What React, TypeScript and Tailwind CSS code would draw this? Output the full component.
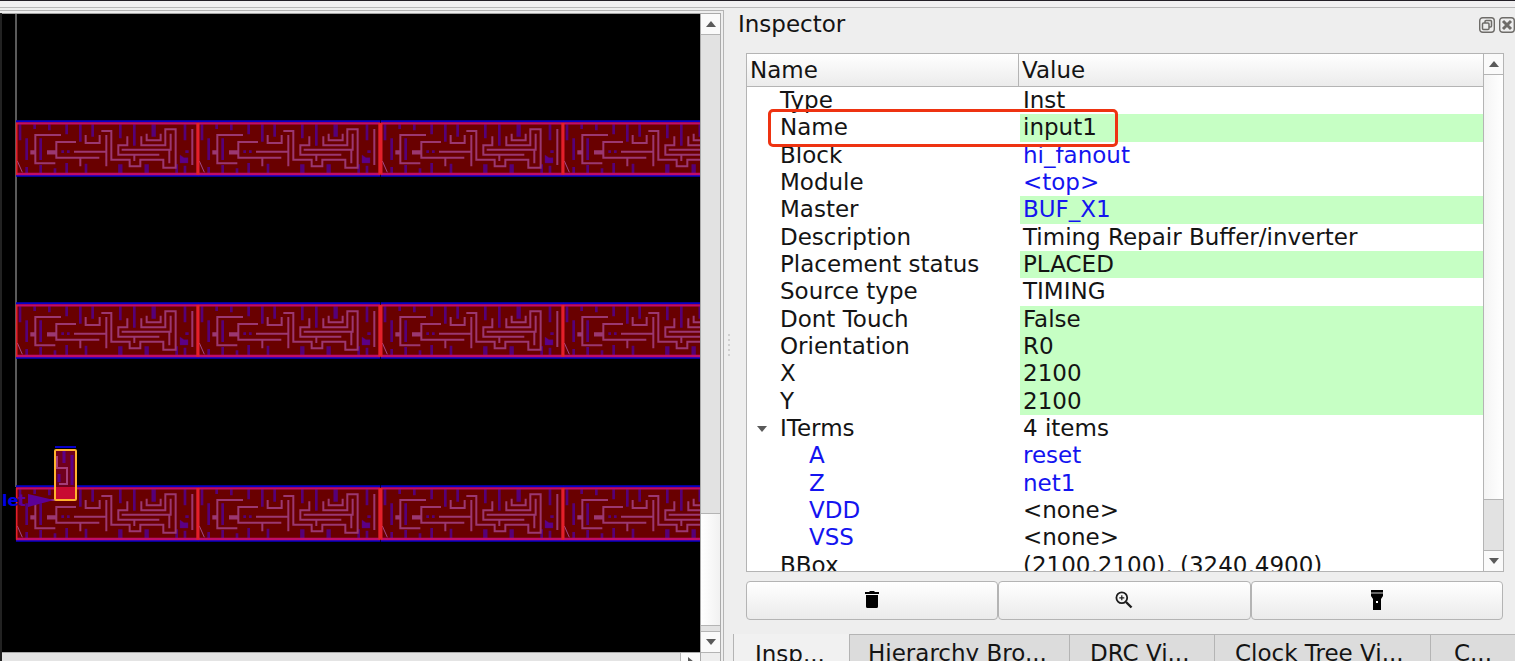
import type { ReactNode } from "react";

type Row = {
  name: string;
  value: string;
  editable?: boolean;
  link?: boolean;
  child?: boolean;
  expandable?: boolean;
};

const rows: Row[] = [
  { name: "Type", value: "Inst" },
  { name: "Name", value: "input1", editable: true },
  { name: "Block", value: "hi_fanout", link: true },
  { name: "Module", value: "<top>", link: true },
  { name: "Master", value: "BUF_X1", link: true, editable: true },
  { name: "Description", value: "Timing Repair Buffer/inverter" },
  { name: "Placement status", value: "PLACED", editable: true },
  { name: "Source type", value: "TIMING" },
  { name: "Dont Touch", value: "False", editable: true },
  { name: "Orientation", value: "R0", editable: true },
  { name: "X", value: "2100", editable: true },
  { name: "Y", value: "2100", editable: true },
  { name: "ITerms", value: "4 items", expandable: true },
  { name: "A", value: "reset", link: true, child: true },
  { name: "Z", value: "net1", link: true, child: true },
  { name: "VDD", value: "<none>", child: true },
  { name: "VSS", value: "<none>", child: true },
  { name: "BBox", value: "(2100,2100), (3240,4900)" },
];

function Cell({ x, y }: { x: number; y: number }) {
  return (
    <g transform={`translate(${x} ${y}) scale(0.3333) translate(-48 -45)`}>
      <rect x="48" y="52" width="547" height="158" fill="#690000" />
      <g stroke="#560078" strokeWidth="8" fill="none">
        <path d="M60 58V106M80 100V165M122 100V165M104 58V72M148 58V76M200 58V88M241 58V110M278 58V95M361 58V100M403 58V122M555 58V106M80 186V206M122 180V206M165 190V206M200 174V206M258 176V206M530 178V206M555 182V206" />
        <path d="M461 58V95M361 178V206M440 178V206" strokeWidth="13" />
        <path d="M184 140H192M201 140H209M556 140H566" />
        <path d="M540 150L552 158H564V174H540Z" fill="#5c0087" strokeWidth="1" />
      </g>
      <g stroke="#9b3771" strokeWidth="6" fill="none">
        <path d="M183 90H106V175H166M228 111H169V158H298M241 158V184M257 90V114H299V90M222 140H320M319 90V184" />
        <path d="M304 78H334V164H389V184H421V164H490V188H527V73H496V121H424V94M440 86V106H482V86" />
        <path d="M382 94V121H355V149H478M365 134H512V86M508 136V175M403 149V168M577 72V180" />
        <path d="M91 142H108M141 142H169" strokeWidth="13" />
        <path d="M52 168L67 202" stroke="#a04a8a" strokeWidth="3" />
      </g>
      <path d="M48 49H595M48 212H595" stroke="#0800c8" strokeWidth="6" />
      <path d="M48 55H595M48 207H595" stroke="#c00c68" strokeWidth="7" />
      <path d="M595 54V209" stroke="#e3202a" strokeWidth="12" />
      <path d="M50 54V209" stroke="#e3202a" strokeWidth="5" />
    </g>
  );
}

function LayoutCanvas() {
  const columns = [16, 198, 381, 563];
  return (
    <svg className="block h-full w-full bg-black" role="img" aria-label="Chip layout">
      <g transform="translate(-2 -14)">
        <path d="M16 14V487" stroke="#5a5a5a" strokeWidth="2" />
        {[120, 302, 485].map((y) => columns.map((x) => <Cell key={`${x}-${y}`} x={x} y={y} />))}
        <text x="2" y="506" fontSize="16" fontWeight="700" fill="#0000e6" fontFamily="DejaVu Sans, sans-serif">
          le<tspan fill="#5c0096">t</tspan>
        </text>
        <path d="M28 494L54 500L28 507Z" fill="#5c0096" />
        <path d="M55 447H76" stroke="#0800c8" strokeWidth="2" />
        <rect x="55" y="450" width="21" height="50" fill="#70001c" />
        <rect x="55" y="487" width="21" height="13" fill="#c80a32" />
        <g stroke="#5c0087" strokeWidth="3">
          <path d="M64 451V463M72 455V485M59 474V482" />
        </g>
        <path d="M57 456V468H67V484H59" stroke="#a53c78" strokeWidth="2" fill="none" />
        <rect x="55" y="450" width="21" height="50" rx="1" fill="none" stroke="#ffb32e" strokeWidth="2" />
      </g>
    </svg>
  );
}

function Arrow({ dir }: { dir: "up" | "down" | "right" }) {
  const d = dir === "up" ? "M0 6L5 0L10 6Z" : dir === "down" ? "M0 0L5 6L10 0Z" : "M2 0L8 5L2 10Z";
  return (
    <svg width="10" height={dir === "right" ? 10 : 6} className="block" aria-hidden="true">
      <path d={d} fill="#5a5a5a" />
    </svg>
  );
}

function StepButton({ label, children }: { label: string; children: ReactNode }) {
  return (
    <button aria-label={label} className="flex h-5 w-full shrink-0 items-center justify-center bg-[#fafafa]">
      {children}
    </button>
  );
}

const tabs = [
  { label: "Hierarchy Bro...", style: "w-[220px] pl-[18px]" },
  { label: "DRC Vi...", style: "w-[145px] pl-5" },
  { label: "Clock Tree Vi...", style: "w-[216px] pl-5" },
  { label: "C...", style: "min-w-0 flex-1 pl-[23px]" },
];

const toolButton =
  "flex h-[39px] flex-1 items-center justify-center rounded-[4px] border border-[#b4b4b4] bg-linear-to-b from-white to-[#ebebeb] pb-[2px]";

export default function App() {
  return (
    <div className="flex h-screen w-full flex-col overflow-hidden bg-[#eeeeee] font-['DejaVu_Sans',sans-serif] text-[23px] leading-[27px] text-[#141414]">
      <div className="h-2 shrink-0 border-t border-b border-t-[#231f26] border-b-[#b8b8b8] bg-[#f1f0f1]" />
      <div className="grid min-h-0 flex-1 grid-cols-[minmax(0,724fr)_minmax(0,791fr)]">
        <section className="mt-[2px] flex min-h-0 border-t border-r border-[#b4b4b4] pt-[2px] pr-[2px]">
          <div className="w-[2px] shrink-0 bg-[#222222]" />
          <div className="flex min-w-0 flex-1 flex-col border-t border-[#a5a5a5]">
            <div className="min-h-0 flex-1">
              <LayoutCanvas />
            </div>
            <div className="flex h-[9px] shrink-0 overflow-hidden border-t border-[#aaaaaa] bg-[#e4e4e4]">
              <div className="flex-1" />
              <button aria-label="Scroll right" className="flex h-5 w-5 items-start justify-center border-l border-[#b4b4b4] bg-[#fafafa] pt-1">
                <Arrow dir="right" />
              </button>
            </div>
          </div>
          <div className="flex w-[21px] shrink-0 flex-col border-t border-r border-l border-[#aaaaaa] bg-[#e2e2e2]">
            <StepButton label="Scroll up">
              <Arrow dir="up" />
            </StepButton>
            <div className="flex-1 border-t border-[#b4b4b4]" />
            <div className="h-[113px] shrink-0 border-t border-b border-[#b4b4b4] bg-linear-to-r from-white to-[#f1f1f1]" />
            <div className="h-[6px] shrink-0 border-b border-[#b4b4b4]" />
            <StepButton label="Scroll down">
              <Arrow dir="down" />
            </StepButton>
            <div className="h-[9px] shrink-0 border-t border-[#b4b4b4] bg-[#eeeeee]" />
          </div>
        </section>

        <aside className="flex min-h-0 min-w-0">
          <div className="flex w-[9px] shrink-0 flex-col items-center justify-center gap-[3px] pt-5" aria-hidden="true">
            {[0, 1, 2, 3, 4].map((i) => (
              <span key={i} className="h-[2px] w-[2px] bg-[#cfcfcf]" />
            ))}
          </div>
          <div className="flex min-w-0 flex-1 flex-col">
            <header className="flex h-[45px] shrink-0 items-start justify-between pt-[3px] pl-[5px]">
              <h1>Inspector</h1>
              <div className="flex gap-1 pt-[6px]">
                <button aria-label="Float panel" className="h-4 w-4">
                  <svg viewBox="0 0 16 16" className="block h-4 w-4" fill="none" stroke="#6e6c69">
                    <rect x="0.7" y="0.7" width="14.6" height="14.6" rx="3" strokeWidth="1.4" />
                    <rect x="6" y="3.5" width="6.5" height="6.5" rx="1" strokeWidth="1.5" />
                    <rect x="3.5" y="6" width="6.5" height="6.5" rx="1" fill="#eeeeee" strokeWidth="1.5" />
                  </svg>
                </button>
                <button aria-label="Close panel" className="h-4 w-4">
                  <svg viewBox="0 0 16 16" className="block h-4 w-4" fill="none" stroke="#6e6c69">
                    <rect x="0.7" y="0.7" width="14.6" height="14.6" rx="3" strokeWidth="1.4" />
                    <path d="M4 4L12 12M12 4L4 12" strokeWidth="3" />
                  </svg>
                </button>
              </div>
            </header>

            <div className="mr-[11px] ml-[13px] flex h-[519px] shrink-0 border border-[#b4b4b4] bg-white">
              <div className="relative min-w-0 flex-1 overflow-hidden">
                <table className="h-[525px] w-full table-fixed border-separate border-spacing-0 text-left whitespace-pre">
                  <thead>
                    <tr className="h-[33px] bg-linear-to-b from-white to-[#ebebeb]">
                      <th className="h-[33px] w-[272px] border-r border-b border-[#b4b4b4] p-0 pl-[3px] font-normal">Name</th>
                      <th className="h-[33px] border-b border-[#b4b4b4] p-0 pl-[3px] font-normal">Value</th>
                    </tr>
                  </thead>
                  <tbody>
                    {rows.map((row) => (
                      <tr key={row.name}>
                        <td className={row.child ? "p-0 pl-[62px] text-[#1414f0]" : "p-0"}>
                          {row.child ? (
                            row.name
                          ) : (
                            <div className="flex items-center">
                              <span className="flex w-[33px] justify-center pr-[3px]">
                                {row.expandable && <Arrow dir="down" />}
                              </span>
                              {row.name}
                            </div>
                          )}
                        </td>
                        <td className="p-0 pl-px">
                          <div
                            className={
                              row.editable
                                ? "flex h-full items-center bg-[#c6ffc4] pl-[3px]"
                                : "flex h-full items-center pl-[3px]"
                            }
                          >
                            {row.link ? (
                              <a href="#" className="text-[#1414f0]">
                                {row.value}
                              </a>
                            ) : (
                              row.value
                            )}
                          </div>
                        </td>
                      </tr>
                    ))}
                  </tbody>
                </table>
                <div className="absolute top-[55px] left-[21px] h-[38px] w-[350px] rounded-[5px] border-[3px] border-[#ee3311]" />
              </div>
              <div className="flex w-5 shrink-0 flex-col border-l border-[#b4b4b4] bg-[#e2e2e2]">
                <StepButton label="Scroll up">
                  <Arrow dir="up" />
                </StepButton>
                <div className="flex-1 border-t border-b border-[#b4b4b4] bg-linear-to-r from-[#f4f4f4] to-white" />
                <div className="h-[51px] shrink-0 border-b border-[#b4b4b4]" />
                <StepButton label="Scroll down">
                  <Arrow dir="down" />
                </StepButton>
              </div>
            </div>

            <div className="mt-[9px] mr-3 ml-[13px] flex shrink-0">
              <button aria-label="Delete" className={toolButton}>
                <svg viewBox="0 0 16 20" className="h-5 w-4" fill="#000">
                  <path d="M1 2H5L6 1H10L11 2H15V4H1ZM2 5H14V16.5Q14 18 12.5 18H3.5Q2 18 2 16.5Z" />
                </svg>
              </button>
              <button aria-label="Zoom to" className={toolButton}>
                <svg viewBox="0 0 18 18" className="h-[18px] w-[18px]" fill="none" stroke="#1c1c1c">
                  <circle cx="6.8" cy="6.8" r="5.4" strokeWidth="1.8" />
                  <path d="M11 11L16.5 16.5" strokeWidth="2.4" />
                  <path d="M4.3 6.8H9.3M6.8 4.3V9.3" strokeWidth="1.2" />
                </svg>
              </button>
              <button aria-label="Highlight" className={toolButton}>
                <svg viewBox="0 0 14 20" className="h-5 w-[14px]" fill="#000">
                  <path d="M1 0H13V2H1Z" />
                  <path d="M1 2H13V4H1Z" fill="#666" />
                  <path d="M1 4H13V6L11 9V20H3V9L1 6Z" />
                  <rect x="6" y="11" width="2" height="2" fill="#fff" />
                </svg>
              </button>
            </div>

            <div role="tablist" className="mt-[14px] flex min-h-0 flex-1 items-stretch overflow-hidden">
              <button role="tab" aria-selected="true" className="flex w-[116px] shrink-0 items-start border-l border-[#b4b4b4] bg-[#f1f1f1] pt-[7px] pl-[21px]">
                Insp...
              </button>
              {tabs.map((tab) => (
                <button
                  key={tab.label}
                  role="tab"
                  aria-selected="false"
                  className={`${tab.style} flex items-start overflow-hidden border-t border-l border-[#b4b4b4] bg-[#dcdcdc] pt-[5px]`}
                >
                  {tab.label}
                </button>
              ))}
            </div>
          </div>
        </aside>
      </div>
    </div>
  );
}
